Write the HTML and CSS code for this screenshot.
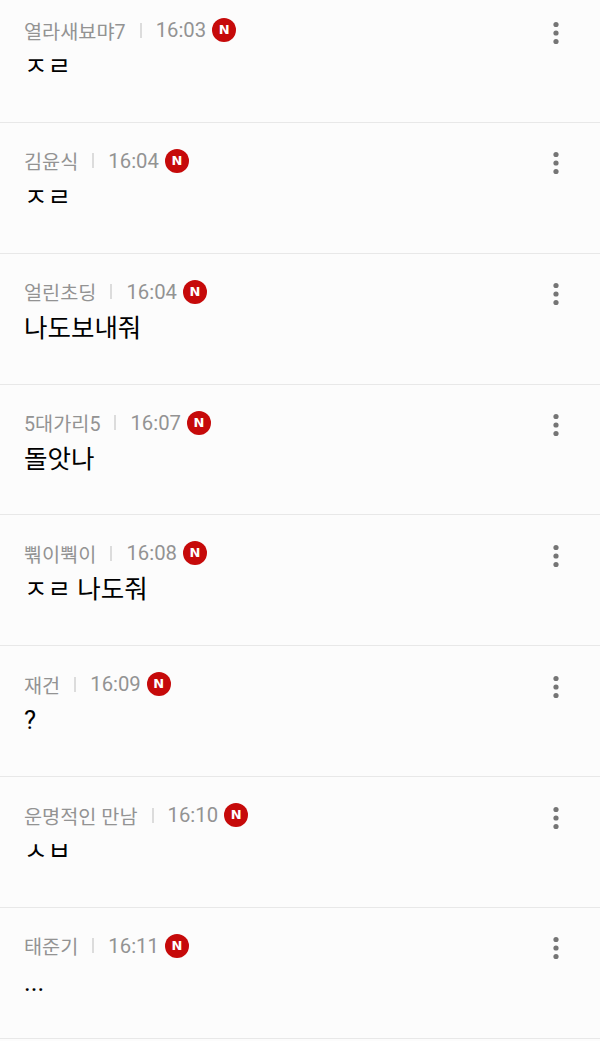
FILE: index.html
```html
<!DOCTYPE html>
<html lang="ko">
<head>
  <meta charset="UTF-8" />
  <title>댓글</title>
  <link rel="stylesheet" href="styles.css">
</head>
<body>

<ul class="comment-list">
  <li class="comment">
    <div class="comment-main">
      <div class="meta"><span class="name">열라새뵤먀7</span><i class="sep"></i><span class="time">16:03</span><span class="badge">N</span></div>
      <p class="text">ㅈㄹ</p>
    </div>
    <svg class="more" viewBox="0 0 6 24"><circle cx="3" cy="3.5" r="2.6"/><circle cx="3" cy="12" r="2.6"/><circle cx="3" cy="20.5" r="2.6"/></svg>
  </li>
  <li class="comment">
    <div class="comment-main">
      <div class="meta"><span class="name">김윤식</span><i class="sep"></i><span class="time">16:04</span><span class="badge">N</span></div>
      <p class="text">ㅈㄹ</p>
    </div>
    <svg class="more" viewBox="0 0 6 24"><circle cx="3" cy="3.5" r="2.6"/><circle cx="3" cy="12" r="2.6"/><circle cx="3" cy="20.5" r="2.6"/></svg>
  </li>
  <li class="comment">
    <div class="comment-main">
      <div class="meta"><span class="name">얼린초딩</span><i class="sep"></i><span class="time">16:04</span><span class="badge">N</span></div>
      <p class="text">나도보내줘</p>
    </div>
    <svg class="more" viewBox="0 0 6 24"><circle cx="3" cy="3.5" r="2.6"/><circle cx="3" cy="12" r="2.6"/><circle cx="3" cy="20.5" r="2.6"/></svg>
  </li>
  <li class="comment">
    <div class="comment-main">
      <div class="meta"><span class="name">5대가리5</span><i class="sep"></i><span class="time">16:07</span><span class="badge">N</span></div>
      <p class="text">돌앗나</p>
    </div>
    <svg class="more" viewBox="0 0 6 24"><circle cx="3" cy="3.5" r="2.6"/><circle cx="3" cy="12" r="2.6"/><circle cx="3" cy="20.5" r="2.6"/></svg>
  </li>
  <li class="comment">
    <div class="comment-main">
      <div class="meta"><span class="name">뿪이뿩이</span><i class="sep"></i><span class="time">16:08</span><span class="badge">N</span></div>
      <p class="text">ㅈㄹ 나도줘</p>
    </div>
    <svg class="more" viewBox="0 0 6 24"><circle cx="3" cy="3.5" r="2.6"/><circle cx="3" cy="12" r="2.6"/><circle cx="3" cy="20.5" r="2.6"/></svg>
  </li>
  <li class="comment">
    <div class="comment-main">
      <div class="meta"><span class="name">재건</span><i class="sep"></i><span class="time">16:09</span><span class="badge">N</span></div>
      <p class="text">?</p>
    </div>
    <svg class="more" viewBox="0 0 6 24"><circle cx="3" cy="3.5" r="2.6"/><circle cx="3" cy="12" r="2.6"/><circle cx="3" cy="20.5" r="2.6"/></svg>
  </li>
  <li class="comment">
    <div class="comment-main">
      <div class="meta"><span class="name">운명적인 만남</span><i class="sep"></i><span class="time">16:10</span><span class="badge">N</span></div>
      <p class="text">ㅅㅂ</p>
    </div>
    <svg class="more" viewBox="0 0 6 24"><circle cx="3" cy="3.5" r="2.6"/><circle cx="3" cy="12" r="2.6"/><circle cx="3" cy="20.5" r="2.6"/></svg>
  </li>
  <li class="comment">
    <div class="comment-main">
      <div class="meta"><span class="name">태준기</span><i class="sep"></i><span class="time">16:11</span><span class="badge">N</span></div>
      <p class="text">...</p>
    </div>
    <svg class="more" viewBox="0 0 6 24"><circle cx="3" cy="3.5" r="2.6"/><circle cx="3" cy="12" r="2.6"/><circle cx="3" cy="20.5" r="2.6"/></svg>
  </li>
</ul>

</body>
</html>
```

FILE: styles.css
```css
html, body {
  height: 100%;
  overflow: hidden;
}
body {
  margin: 0;
  background: #fcfcfc;
  font-family: Roboto, "Noto Sans CJK KR", sans-serif;
}
.comment-list {
  list-style: none;
  margin: -8px 0 0;
  padding: 0;
}
.comment {
  box-sizing: border-box;
  height: 130.85px;
  padding: 26px 41px 0 24px;
  display: flex;
  justify-content: space-between;
  align-items: flex-start;
  border-bottom: 1px solid #e8e8e8;
}
.meta {
  display: flex;
  align-items: center;
  height: 24px;
  font-size: 20.3px;
  color: #939393;
}
.name {
  font-size: 19.7px;
}
.sep {
  width: 2px;
  height: 15px;
  margin: 0 14px;
  background: #dcdcdc;
}
.badge {
  width: 24px;
  height: 24px;
  margin-left: 6px;
  border-radius: 50%;
  background: #c60a0a;
  color: #fff;
  font-family: "DejaVu Sans", sans-serif;
  font-size: 13px;
  font-weight: 700;
  line-height: 24px;
  text-align: center;
}
.text {
  margin: 7px 0 0;
  font-size: 25.5px;
  line-height: 34px;
  color: #000;
}
.more {
  width: 6px;
  height: 24px;
  margin-top: 2.5px;
  fill: #757575;
}
```
